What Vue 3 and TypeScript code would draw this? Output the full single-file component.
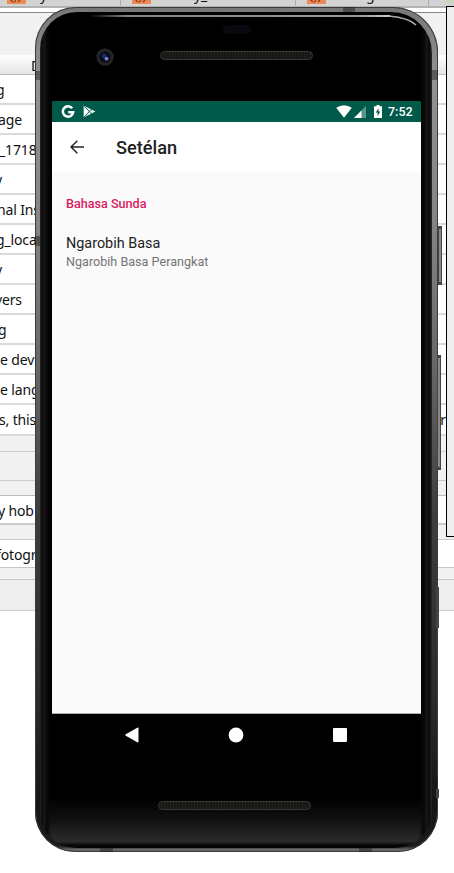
<script setup lang="ts">
interface Row {
  text: string
  shift: number
}

const rows: Row[] = [
  { text: 'g', shift: -4 },
  { text: 'age', shift: -2 },
  { text: '_1718', shift: -1 },
  { text: 'y', shift: -5 },
  { text: 'nal Ins', shift: -3 },
  { text: 'g_loca', shift: -4 },
  { text: 'y', shift: -5 },
  { text: 'vers', shift: -5 },
  { text: 'g', shift: -2 },
  { text: 'e dev', shift: 0 },
  { text: 'e lang', shift: 0 },
  { text: 's, this', shift: -1 },
]

const tabs: { width: number; icon: number; label: string; gap: number }[] = [
  { width: 121, icon: 7, label: 'y', gap: 14 },
  { width: 175, icon: 11, label: 'y_', gap: 43 },
  { width: 133, icon: 11, label: 'g', gap: 40 },
]
</script>

<template>
  <div class="desktop">
    <div class="backdrop">
      <div class="tabs">
        <div v-for="(tab, i) in tabs" :key="i" class="tab" :style="{ width: tab.width + 'px', paddingLeft: tab.icon + 'px' }">
          <svg class="tab-icon" width="19" height="4" viewBox="0 0 19 4">
            <rect width="19" height="4" fill="#ee8855" />
            <path d="M3.500 0L6 2M9 0L7 2.500M11 2L13 0" stroke="#8b3c1c" stroke-width="1.200" fill="none" />
          </svg>
          <span class="tab-label" :style="{ marginLeft: tab.gap + 'px' }">{{ tab.label }}</span>
        </div>
        <div class="tab-last"><i></i></div>
      </div>
      <div class="strip"></div>
      <div class="toolbar"></div>
      <div class="head"><span>D</span></div>
      <div v-for="(row, i) in rows" :key="i" class="row">
        <span :style="{ marginLeft: row.shift + 'px' }">{{ row.text }}</span>
        <span v-if="i === rows.length - 1" class="row-end">r</span>
      </div>
      <div class="band b1"></div>
      <div class="band b2"></div>
      <div class="band b3"></div>
      <div class="field f1"><span>y hob</span></div>
      <div class="band b4"></div>
      <div class="field f2"><span>fotogr</span></div>
      <div class="band b5"></div>
      <div class="band b6"></div>
    </div>
    <div class="side-panel"></div>

    <div class="phone">
      <i class="key power"></i>
      <i class="key volume"></i>
      <i class="key lower"></i>
      <i class="key foot"></i>
      <i class="seam s1"></i>
      <i class="seam s2"></i>
      <i class="seam s3"></i>
      <i class="seam s4"></i>
      <i class="seam s5"></i>
      <i class="seam s6"></i>
      <i class="seam s7"></i>
      <div class="glass">
        <svg class="gleam" width="391" height="40" viewBox="0 0 391 40" fill="none">
          <defs>
            <linearGradient id="gleam" x1="0" x2="1" y1="0" y2="0">
              <stop offset="0" stop-color="#777" stop-opacity="0" />
              <stop offset=".12" stop-color="#808080" />
              <stop offset=".9" stop-color="#9a9a9a" />
              <stop offset="1" stop-color="#ccc" />
            </linearGradient>
          </defs>
          <path d="M49 2H350V4H49Z" fill="url(#gleam)" />
          <path d="M349 3C360 4 370 6 376 12" stroke="#a5adad" stroke-width="1.700" />
        </svg>
        <div class="forehead">
          <svg class="camera" width="18" height="18" viewBox="0 0 18 18">
            <circle cx="9" cy="9" r="8.700" fill="#242424" />
            <circle cx="9" cy="9" r="5.500" fill="#070a1a" />
            <circle cx="8" cy="8" r="2.400" fill="#1c2861" />
            <circle cx="10.500" cy="10.700" r="1.900" fill="#717fd8" />
          </svg>
          <i class="speaker"></i>
          <i class="sensor"></i>
        </div>
        <div class="screen">
          <div class="status">
            <svg class="google" width="14" height="14" viewBox="0 0 14 14">
              <path d="M11.200 3.300A5.200 5.200 0 1 0 12.200 7.300H7.200" fill="none" stroke="#fff" stroke-width="2.500" />
            </svg>
            <svg class="play" width="13" height="13" viewBox="0 0 13 13">
              <path d="M.6.5L12.500 6.500.6 12.500Z" fill="#e3f1ef" />
              <path d="M1 .8L8.700 9M1 12.200L8.700 4" stroke="#075849" stroke-width=".9" />
              <path d="M1.200 2.600L5 6.500 1.200 10.400Z" fill="#fff" />
            </svg>
            <span class="fill"></span>
            <svg class="wifi" width="16" height="13" viewBox="0 0 16 13">
              <path d="M.2 2.700Q8-2.300 15.800 2.700L8 12.700Z" fill="#fff" />
            </svg>
            <svg class="signal" width="12" height="12" viewBox="0 0 12 12">
              <path d="M12 0V12H0Z" fill="#5a938a" />
              <path d="M7.500 4.500V12H0Z" fill="#fff" />
            </svg>
            <svg class="battery" width="8" height="13" viewBox="0 0 8 13">
              <path d="M2.500 0H5.500V1.300H8V13H0V1.300H2.500Z" fill="#fff" />
              <path d="M4.500 3.200L1.800 7.600H3.600V11L6.300 6.500H4.500Z" fill="#005a4a" />
            </svg>
            <span class="clock">7:52</span>
          </div>
          <header class="appbar">
            <svg width="14" height="14" viewBox="0 0 14 14" fill="none" stroke="#222" stroke-width="1.500">
              <path d="M14 7H1.200M7.300.7L1 7L7.300 13.300" />
            </svg>
            <h1>Setélan</h1>
          </header>
          <main class="settings">
            <div class="category">Bahasa Sunda</div>
            <div class="pref-title">Ngarobih Basa</div>
            <div class="pref-summary">Ngarobih Basa Perangkat</div>
          </main>
        </div>
        <nav class="nav">
          <svg width="14" height="16" viewBox="0 0 14 16"><path d="M.8 7.300L12.300.7Q13.500.2 13.500 1.300V14.700Q13.500 15.800 12.300 15.200L.8 8.700Q-.2 8 .8 7.300Z" fill="#fff" /></svg>
          <svg width="16" height="16" viewBox="0 0 16 16"><circle cx="8" cy="8" r="7.400" fill="#fff" /></svg>
          <svg width="14" height="14" viewBox="0 0 14 14"><rect width="14" height="14" rx="1" fill="#fff" /></svg>
        </nav>
        <div class="chin"><i class="speaker"></i></div>
      </div>
    </div>
  </div>
</template>

<style>
body {
  margin: 0;
  background: #fff;
  overflow: hidden;
}
</style>

<style scoped>
.desktop {
  position: relative;
  width: 454px;
  height: 873px;
  overflow: hidden;
  background: #fff;
  font-family: "Noto Sans", "Open Sans", sans-serif;
}
.desktop * { box-sizing: border-box; }
svg { display: block; flex: none; }
i { display: block; }
.backdrop {
  display: flex;
  flex-direction: column;
  font-size: 14px;
  letter-spacing: -0.15px;
  color: #111;
}
.tabs {
  display: flex;
  height: 8px;
  overflow: hidden;
  background: #d3d3d3;
  border-bottom: 2px solid #b3b3b3;
}
.tab {
  display: flex;
  flex: none;
  height: 6px;
  border-right: 1px solid #aaa;
}
.tab-label { line-height: 20px; margin-top: -15px; }
.tab-last { padding: 0 0 0 15px; }
.tab-last i { width: 12px; height: 3px; background: #c8d6bd; }
.strip { height: 5px; background: #fff; border-bottom: 1px solid #888; }
.toolbar { height: 42px; background: #f1f1f1; }
.head {
  height: 20px;
  padding-left: 31px;
  line-height: 21px;
  background: linear-gradient(#fefefe, #e5e5e5);
  border-bottom: 1px solid #bbb;
}
.row {
  display: flex;
  justify-content: space-between;
  height: 30px;
  padding-right: 8px;
  line-height: 29px;
  border-bottom: 2px solid #dadada;
  white-space: nowrap;
}
.row:nth-last-child(9) { height: 31px; }
.band { background: #f1f1f1; }
.b1 { height: 16px; border-bottom: 1px solid #ccc; }
.b2 { height: 29px; border-bottom: 1px solid #ccc; }
.b3 { height: 15px; border-bottom: 1px solid #bbb; }
.field { line-height: 30px; overflow: hidden; }
.f1 { height: 29px; border-bottom: 2px solid #ccc; }
.f1 span { margin-left: -2px; }
.b4 { height: 15px; border-bottom: 1px solid #ccc; }
.f2 { height: 28px; border-bottom: 1px solid #c5c5c5; }
.f2 span { margin-left: -4px; }
.b5 { height: 12px; border-bottom: 1px solid #c5c5c5; }
.b6 { height: 31px; background: #eee; border-bottom: 1px solid #ccc; }
.side-panel {
  position: absolute;
  left: 446px;
  top: 6px;
  width: 10px;
  height: 531px;
  background: #efefef;
  border: 1px solid #000;
}
.phone {
  position: absolute;
  left: 35px;
  top: 7px;
  width: 403px;
  height: 845px;
  padding: 5px 6px 4px 5px;
  border-radius: 41px 45px 40px 40px;
  background: linear-gradient(#777 0, #929292 8%, #858585 25%, #666 43%, #3d3d3d 60%, #2b2b2b 82%, #151515 94%, #1c1c1c 99.300%, #666 99.700%);
  box-shadow: inset 0 0 0 1px #3b3b3b;
}
.glass {
  position: relative;
  display: flex;
  flex-direction: column;
  height: 836px;
  border-radius: 37px 41px 37px 36px;
  background:
    linear-gradient(90deg, #2a2a2a 0, #080808 2px, #191919 4px, #080808 7px, transparent 11px, transparent 379px, #080808 384px, #191919 387px, #080808 389px, #2a2a2a 392px),
    linear-gradient(#000 0, #000 94%, #101010 96.500%, #262626 98.800%, #2c2c2c 99.200%, #050505 99.700%);
  overflow: hidden;
}
.gleam { position: absolute; left: 0; top: 1px; }
.forehead {
  position: relative;
  display: flex;
  height: 89px;
  padding: 36px 0 0 56px;
}
.speaker {
  width: 153px;
  height: 9px;
  border: 1px solid #393836;
  border-radius: 5px;
  background: repeating-linear-gradient(90deg, #171613 0, #171613 2px, #24221e 2px, #24221e 3px);
}
.forehead .speaker { margin: 3px 0 0 46px; }
.sensor {
  position: absolute;
  left: 183px;
  top: 13px;
  width: 27px;
  height: 9px;
  border-radius: 5px;
  background: #090a10;
}
.screen {
  width: 369px;
  height: 613px;
  margin-left: 12px;
  background: #fafafa;
  border-bottom: 1px solid #aaa;
  font-family: Roboto, sans-serif;
}
.status {
  display: flex;
  align-items: center;
  height: 21px;
  padding: 0 7px 0 9px;
  background: #005a4a;
  color: #fff;
}
.play { margin-left: 8px; }
.fill { flex: 1; }
.signal { margin-left: 2px; }
.battery { margin-left: 8px; }
.clock { width: 26px; margin-left: 6px; font-size: 12.500px; font-weight: 500; line-height: 21px; }
.appbar {
  display: flex;
  align-items: center;
  height: 50px;
  padding-left: 18px;
  background: #fff;
}
h1 {
  margin: 2px 0 0 32px;
  color: #222;
  font-size: 18.200px;
  font-weight: 500;
  line-height: 24px;
}
.settings { padding: 23px 14px; }
.category { color: #d81b60; font-size: 12.600px; font-weight: 500; line-height: 18px; }
.pref-title { margin-top: 21px; color: #222; font-size: 14.400px; line-height: 20px; }
.pref-summary { color: #757575; font-size: 12.600px; line-height: 16px; }
.nav {
  display: flex;
  align-items: center;
  justify-content: space-between;
  height: 42px;
  padding: 0 85px;
}
.chin { padding: 45px 0 0 118px; }
.key {
  position: absolute;
  width: 4px;
  border: solid #444;
  border-width: 3px 1px;
  background: #888;
}
.power { left: 403px; top: 219px; height: 59px; }
.volume { left: 402px; top: 348px; height: 115px; }
.lower { left: 401px; top: 580px; width: 3px; height: 41px; background: #444; }
.foot { left: 401px; top: 782px; width: 3px; height: 9px; background: #333; }
.seam { position: absolute; background: rgba(25, 25, 25, 0.45); }
.s1 { left: 0; top: 64px; width: 5px; height: 9px; }
.s2 { left: 0; top: 229px; width: 5px; height: 10px; }
.s3 { left: 397px; top: 63px; width: 6px; height: 10px; }
.s4 { left: 308px; top: 0; width: 12px; height: 5px; }
.s5 { left: 65px; top: 841px; width: 13px; height: 4px; }
.s6 { left: 324px; top: 841px; width: 13px; height: 4px; }
.s7 { left: 397px; top: 771px; width: 6px; height: 9px; }
</style>
